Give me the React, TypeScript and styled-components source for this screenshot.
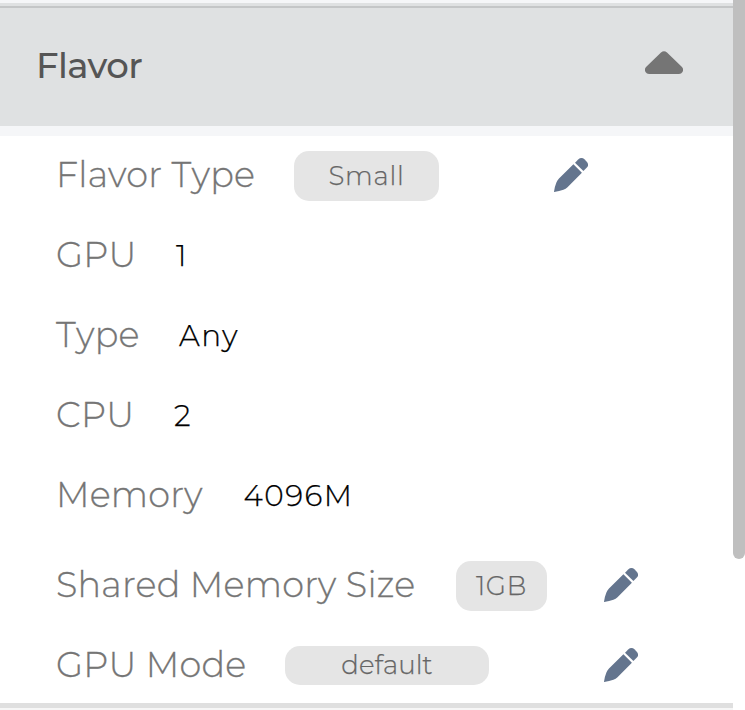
import React from "react";
import styled, { createGlobalStyle } from "styled-components";

const GlobalStyle = createGlobalStyle`
  * { box-sizing: border-box; }
  body { margin: 0; background: #fff; overflow: hidden; font-family: Montserrat, Inter, sans-serif; font-weight: 300; }
`;

const Page = styled.div`
  display: flex;
  width: 745px;
  height: 710px;
  background: #fff;
`;

const Panel = styled.section`
  display: flex;
  flex-direction: column;
  width: 733px;
  height: 710px;
  border-top: 3px solid #f5f6f8;
  border-bottom: 2px solid #f6f6f6;
`;

const HeaderEdge = styled.div`
  flex: none;
  height: 5px;
  background: #dfe1e2;
  border-bottom: 2px solid #c4c6c7;
`;

const Header = styled.header`
  display: flex;
  flex: none;
  align-items: center;
  justify-content: space-between;
  height: 128px;
  padding: 0 50px 2px 36px;
  background: #dfe1e2;
  border-bottom: 10px solid #f5f6f8;
`;

const Title = styled.h2`
  margin: 0;
  font-size: 35.5px;
  line-height: 40px;
  font-weight: 500;
  color: #555;
  letter-spacing: -0.6px;
`;

const Caret = styled.svg`
  display: block;
  width: 38px;
  height: 23px;
  margin-bottom: 7px;
`;

const Body = styled.div`
  display: flex;
  flex-direction: column;
  flex: 1;
  min-height: 0;
  padding: 0 0 0 56px;
  border-bottom: 5px solid #dfdfdf;
`;

const Label = styled.span<{ $width: number }>`
  flex: none;
  width: ${(p) => p.$width}px;
  padding-bottom: 3px;
  font-size: 35px;
  line-height: 40px;
  color: #757575;
  -webkit-text-stroke: 0.3px #757575;
  white-space: nowrap;
  letter-spacing: 0.25px;
`;

const Value = styled.span`
  font-size: 29.5px;
  line-height: 40px;
  padding-bottom: 3px;
  color: #000;
  -webkit-text-stroke: 0.25px #000;
  white-space: nowrap;
  letter-spacing: 1.5px;
`;

const Chip = styled.span<{ $width: number; $height?: number; $spacing?: number }>`
  display: flex;
  align-items: center;
  justify-content: center;
  flex: none;
  width: ${(p) => p.$width}px;
  height: ${(p) => p.$height ?? 50}px;
  border-radius: 15px;
  background: #e5e5e5;
  color: #666;
  -webkit-text-stroke: 0.25px #666;
  font-size: 26px;
  line-height: 30px;
  letter-spacing: ${(p) => p.$spacing ?? 0.8}px;
`;

const EditButton = styled.button<{ $gap: number }>`
  display: flex;
  flex: none;
  margin: 0 0 2px ${(p) => p.$gap}px;
  padding: 0;
  border: 0;
  background: none;
`;

const Row = styled.div<{ $gapBefore?: number }>`
  display: flex;
  align-items: center;
  flex: none;
  height: 80px;
  margin-top: ${(p) => p.$gapBefore ?? 0}px;

  &:last-child {
    height: 77px;
    margin-top: 1px;
  }
  &:last-child ${Label} {
    padding-bottom: 1px;
  }
  &:last-child ${Chip} {
    padding-bottom: 2px;
  }
  &:last-child ${EditButton} {
    margin-bottom: 1px;
  }
`;

const Scrollbar = styled.aside`
  width: 12px;
  height: 710px;
  background: #fff;
`;

const Thumb = styled.div`
  height: 559px;
  background: #bfbfbf;
  border-radius: 0 0 6px 6px;
`;

function Pencil({ gap }: { gap: number }) {
  return (
    <EditButton $gap={gap} aria-label="Edit">
      <svg width="34" height="34" viewBox="0 0 34 34" fill="#64758e">
        <path d="M19.4 6.2 27.9 14.7 13.5 29.2Q11.8 30.9 9.4 31.8Q5.4 33.3 0.2 34Q0 34 0 33.7Q0.7 28.5 2.4 24.5Q3.2 22.1 5 20.4Z" />
        <path d="M21 4.7 24.2 1.5Q27.4-1.3 30.7 1.5L32.5 3.4Q35.6 6.7 32.6 9.8L29.4 13.1Z" />
      </svg>
    </EditButton>
  );
}

export default function App() {
  return (
    <>
      <GlobalStyle />
      <Page>
        <Panel>
          <HeaderEdge />
          <Header>
            <Title>Flavor</Title>
            <Caret viewBox="0 0 38 23" fill="#757575">
              <path d="M16 1.5Q19-1.2 22 1.5L37 16Q39 18.5 37.5 21Q36.3 23 34 23H4Q1.7 23 .5 21Q-1 18.5 1 16Z" />
            </Caret>
          </Header>
          <Body>
            <Row>
              <Label $width={238}>Flavor Type</Label>
              <Chip $width={145}>Small</Chip>
              <Pencil gap={115} />
            </Row>
            <Row>
              <Label $width={120}>GPU</Label>
              <Value>1</Value>
            </Row>
            <Row>
              <Label $width={123}>Type</Label>
              <Value>Any</Value>
            </Row>
            <Row>
              <Label $width={118}>CPU</Label>
              <Value>2</Value>
            </Row>
            <Row>
              <Label $width={187.5}>Memory</Label>
              <Value>4096M</Value>
            </Row>
            <Row $gapBefore={10}>
              <Label $width={400}>Shared Memory Size</Label>
              <Chip $width={91}>1GB</Chip>
              <Pencil gap={57} />
            </Row>
            <Row>
              <Label $width={229}>GPU Mode</Label>
              <Chip $width={204} $height={39} $spacing={0.1}>default</Chip>
              <Pencil gap={115} />
            </Row>
          </Body>
        </Panel>
        <Scrollbar>
          <Thumb />
        </Scrollbar>
      </Page>
    </>
  );
}
